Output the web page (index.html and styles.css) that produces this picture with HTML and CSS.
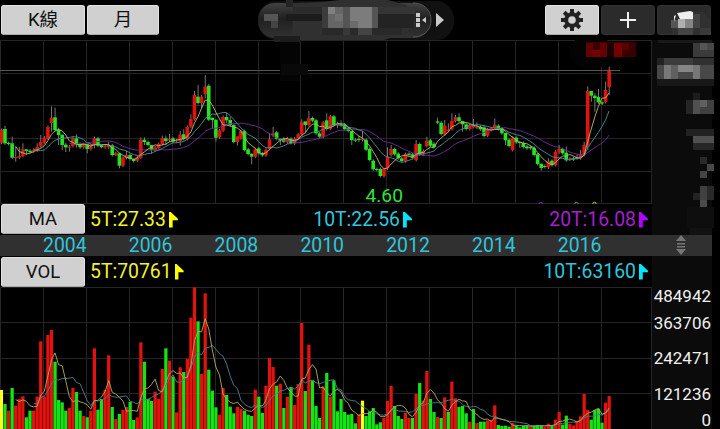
FILE: index.html
```html
<!DOCTYPE html>
<html lang="zh-Hant">
	<head>
		<meta charset="UTF-8">
		<title>K線</title>
		<link rel="stylesheet" href="styles.css">
	</head>
	<body>
		<div class="app">
			<div class="toolbar">
				<button class="btn kline">K線</button>
				<button class="btn month">月</button>
				<svg class="stock" width="198" height="42" viewBox="257 0 198 42">
					<defs>
						<linearGradient id="pill" x1="0" y1="0" x2="0" y2="1">
							<stop offset="0" stop-color="#414141"/>
							<stop offset="0.45" stop-color="#202020"/>
							<stop offset="1" stop-color="#323232"/>
						</linearGradient>
					</defs>
					<rect x="258" y="1" width="196" height="39" rx="18" fill="#111"/>
					<rect x="258" y="3" width="173" height="35" rx="17" fill="url(#pill)"/>
					<path d="M413 3c12 0 18 8 18 17s-6 17-18 17" fill="none" stroke="#555"/>
					<path d="M293 3L320 2l20-2h48l18 5 8 10 1 11-12 8-22 7h-47l-42-1z" fill="#303030"/>
					<g class="mosaic" id="nameMosaic"></g>
					<path d="M416 13h4v4h-4zM416 18h4v4h-4zM416 23h4v4h-4zM426 17v6l-4-3zM436 13l8 7-8 7z" fill="#c9c9c9"/>
				</svg>
				<button class="btn gear">
					<svg width="24" height="24" viewBox="-12 -12 24 24">
						<g fill="#222">
							<rect x="-2" y="-11" width="4" height="22"/>
							<rect x="-2" y="-11" width="4" height="22" transform="rotate(45)"/>
							<rect x="-2" y="-11" width="4" height="22" transform="rotate(90)"/>
							<rect x="-2" y="-11" width="4" height="22" transform="rotate(135)"/>
							<circle r="7.8"/>
						</g>
						<circle r="3.8" fill="#d2d2d2"/>
					</svg>
				</button>
				<button class="btn dark">
					<svg width="18" height="18" viewBox="0 0 18 18"><path d="M9 1v16M1 9h16" stroke="#eee" stroke-width="2"/></svg>
				</button>
				<button class="btn dark cards">
					<svg width="40" height="30" viewBox="671 5 40 30">
						<path d="M672 20l3-4 10-4h18l7 7v16h-38z" fill="#303030"/>
						<g class="mosaic" id="cardMosaic"></g>
						<path d="M677 13l13-2 3 1v7h-13zM674 16l2-1-2 7z" fill="#eee"/>
					</svg>
				</button>
			</div>

			<div class="panel">
				<div class="left">
					<svg class="price" id="price" width="652" height="164" viewBox="0 40 652 164"></svg>
					<div class="legend">
						<button class="btn">MA</button>
						<div class="t5">5T:27.33<i class="flag"></i></div>
						<div class="t10">10T:22.56<i class="flag"></i></div>
						<div class="t20">20T:16.08<i class="flag"></i></div>
					</div>
				</div>
				<svg class="side" id="side" width="68" height="195" viewBox="652 40 68 195"></svg>
			</div>

			<div class="years">
				<span>2004</span><span>2006</span><span>2008</span><span>2010</span><span>2012</span><span>2014</span><span>2016</span>
				<svg class="drag" width="10" height="20" viewBox="0 0 10 20">
					<path d="M5 0l5 6H0zM1 8h8v1.5H1zM1 11h8v1.5H1zM0 14h10l-5 6z" fill="#777"/>
				</svg>
			</div>

			<div class="panel">
				<div class="left">
					<div class="legend vol">
						<button class="btn">VOL</button>
						<div class="t5">5T:70761<i class="flag"></i></div>
						<div></div>
						<div class="t10">10T:63160<i class="flag"></i></div>
					</div>
					<svg class="volume" id="volume" width="652" height="142" viewBox="0 287 652 142"></svg>
				</div>
				<div class="scale">
					<span>484942</span>
					<span>363706</span>
					<span>242471</span>
					<span>121236</span>
					<span>0</span>
				</div>
			</div>
		</div>
		<script src="chart.js"></script>
	</body>
</html>
```
FILE: styles.css
```css
* {
    margin: 0;
    padding: 0;
    box-sizing: border-box;
}
body {
    width: 720px;
    height: 429px;
    background: #000;
    overflow: hidden;
    font-family: Roboto, "Noto Sans CJK TC", sans-serif;
    font-size: 19.4px;
}
svg {
    display: block;
}
.toolbar {
    height: 40px;
    display: flex;
    align-items: flex-start;
    padding: 5px 0 0 1px;
    gap: 2px;
}
.btn {
    width: 84px;
    height: 30px;
    border: 1px solid #e2e2e2;
    border-bottom-color: #aaa;
    border-radius: 3px;
    background: #d0d0d0;
    color: #111;
    font-family: inherit;
    font-size: 18.5px;
    line-height: 28px;
    display: flex;
    align-items: center;
    justify-content: center;
}
.toolbar .month {
    width: 72px;
}
.stock {
    margin: -5px 88px 0 96px;
    flex: none;
}
.toolbar .gear,
.toolbar .dark {
    width: 54px;
    flex: none;
}
.toolbar .dark {
    background: #2b2b2b;
    border-color: #333;
}
.toolbar .cards {
    justify-content: flex-end;
}
.cards svg {
    flex: none;
    margin-right: -1px;
}
.panel {
    display: flex;
}
.left {
    width: 652px;
}
.price {
    overflow: visible;
}
/* 均線數值列 */
.legend {
    height: 31px;
    padding-left: 1px;
    display: grid;
    grid-template-columns: 89px 161px 161px 240px;
    align-items: center;
}
.legend .btn {
    align-self: start;
}
.legend.vol .btn {
    align-self: center;
}
.legend div {
    display: flex;
    align-items: center;
    line-height: 30px;
}
.t5 {
    color: #f2f22e;
}
.t10 {
    color: #2fc6dc;
    justify-content: flex-end;
}
.t20 {
    color: #a520cf;
    justify-content: flex-end;
}
.legend .t20,
.legend.vol .t10 {
    padding-right: 4px;
}
.flag {
    width: 9px;
    height: 16px;
    margin-left: 3px;
    background: #ff0;
    clip-path: polygon(0 0, 15% 0, 100% 46%, 100% 54%, 42% 54%, 42% 100%, 0 100%);
}
.t10 .flag {
    background: #00e5ff;
}
.t20 .flag {
    background: #b400ff;
}
.years {
    width: 712px;
    height: 21px;
    padding-left: 43px;
    background: #303030;
    color: #2fc6dc;
    display: grid;
    grid-template-columns: repeat(6, 85.8px) 118px 10px;
    line-height: 21px;
}
.scale {
    width: 60px;
    height: 173px;
    padding: 31px 1px 0 0;
    background: #0b0b0b;
    color: #f0f0f0;
    font-size: 17px;
    text-align: right;
    display: grid;
    grid-template-rows: 18px 36px 35px 36px 17px;
    align-items: center;
    line-height: 17px;
}
```
FILE: chart.js
```js
var NS = 'http://www.w3.org/2000/svg';
var STEP = 3.575; // 每根K棒的間距
var RED = '#e3120e', GREEN = '#1fe61f';

// [漲跌, 實體上緣, 實體下緣, 最高, 最低]，單位為 1/3 px，由 y=95 起算
var candles = [
	['r',105,143],['g',102,145,92],['g',144,147],['g',145,188,125],['r',186,189,155,200],['r',183,188,155],
	['r',163,183,145],['g',163,168,163,180],['g',167,171],['r',165,169],['r',156,166,145],['r',141,154,120],
	['r',128,142],['r',96,130],['r',68,84,34,110],['g',67,105,38],['g',104,120,98,150],['g',119,150,119,165],
	['g',149,157,143,171],['r',155,158,150,170],['r',130,153],['g',130,148,118,158],['g',147,157],['r',148,157],
	['g',148,162,148,175],['r',150,162],['r',130,150,124,160],['g',130,152],['g',151,157,151,160],['r',154,157],
	['r',151,157,140,163],['g',151,180],['r',174,180,170,183],['g',175,212,175,220],['r',188,212],['r',180,189,168],
	['g',180,192],['g',191,198,191,203],['r',187,197],['r',135,188,128],['g',134,141,127,150],['g',141,150],
	['g',150,164,150,175],['r',157,165],['r',147,159],['r',130,147,122],['g',130,138,122,150],['r',132,136,117],
	['g',130,140],['r',136,139],['r',119,138,108,152],['g',118,132,103],['r',96,132],['r',72,95,58],
	['r',0,72,-12],['g',5,24,-30],['r',5,24,0,40],['r',-25,-2,-60,10],['g',-28,74],['g',68,75,68,100],
	['g',74,128,74,140],['r',106,127],['r',66,107],['g',66,76,54,85],['g',75,90,65],['g',90,141],
	['r',124,141,124,152],['r',108,130],['g',108,165],['g',163,177],['g',176,185,176,208],['r',163,185],
	['g',160,175],['g',175,181],['r',164,181],['r',133,162,115],['r',115,122,96],['g',112,132],
	['g',131,136,131,150],['g',131,140],['r',131,142],['g',131,144],['r',131,146],['r',118,130],
	['r',82,118,73],['g',79,90,79,115],['r',69,90,48],['g',69,77],['g',76,115],['g',115,125],
	['r',82,125],['g',76,102,55],['r',64,101],['g',64,90,60],['r',87,90,80,100],['g',88,91,76],
	['g',89,102],['g',100,108],['g',108,135,108,150],['g',134,137],['g',132,135,122,142],['r',132,135,108],
	['g',134,164],['g',162,195],['g',197,223],['g',222,225],['g',222,243],['r',220,243,220,248],
	['r',185,220,157],['r',162,180,150],['g',162,178],['g',176,190],['g',190,198],['r',177,198],
	['g',176,180],['g',178,188],['r',147,195,135],['g',147,178],['r',168,178],['r',137,153,125],
	['g',136,152],['g',146,156],['g',79,83,68],['g',83,117],['r',92,118,75],['r',104,108,85],
	['r',78,102,55],['r',67,78,60],['g',67,78,55],['g',78,88,78,110],['g',88,102],['r',92,102],
	['r',92,96,72],['r',94,98,82],['g',95,103],['g',97,123],['r',103,122],['r',100,105],
	['r',89,100,70],['g',92,102],['g',100,115],['g',114,136,114,150],['g',134,153],['r',128,165],
	['g',128,142],['g',141,144,141,158],['g',144,156],['g',154,160],['g',156,160],['g',158,180],
	['g',178,207],['g',206,219,206,227],['g',213,216],['r',199,217,190],['g',197,210],['r',170,210],
	['r',162,172,150],['g',162,175],['g',173,196,155],['r',190,193],['g',190,193],['g',187,190,178],
	['r',178,190,165],['r',150,180,140],['r',-12,150,-26,165],['g',-12,2,-12,20],['g',2,9,-5,50],['g',6,22,-18],
	['g',22,26],['r',-15,21,-40],['r',-73,-23,-85,0]
];

// 成交量柱高 (1/3 px)
var volumes = [
	117,75,55,123,70,90,98,35,55,55,97,263,97,282,297,202,87,80,55,63,123,111,55,39,35,55,242,58,90,117,221,66,30,45,57,66,
	81,27,35,260,202,90,84,112,90,180,242,205,157,50,185,171,210,334,425,323,165,407,178,115,65,43,123,102,67,47,66,61,55,
	43,39,118,97,48,130,213,186,130,136,63,97,126,72,135,318,114,253,146,69,33,128,168,97,146,53,90,51,43,45,17,44,85,39,53,
	63,14,20,33,84,129,69,39,30,48,33,33,105,138,85,174,90,51,36,33,95,51,142,92,66,69,47,22,60,18,22,22,26,27,71,12,9,10,7,
	18,10,5,9,10,8,10,12,9,6,16,10,28,51,13,40,16,11,25,38,105,57,28,57,61,19,79,99
];
var volColors =
	'ygrgrrrggrrrrrrggggrrggrgrrggrrgrgrrggrrgggrrrgrgrrgrrrgrrgggrrgggrrggg' +
	'rggrrrgrgrgrrrgrgggrgrgggggggry' +
	'gggggrrrgggrrgrgrrggrgrgrrgggrgrggrrrgggg' +
	'rggggrgggrrgrrggrrrrrrggggrr';

function add(parent, tag, attrs) {
	var el = document.createElementNS(NS, tag);
	for (var k in attrs) {
		el.setAttribute(k, attrs[k]);
	}
	parent.appendChild(el);
	return el;
}
function rect(parent, x, y, w, h, fill) {
	return add(parent, 'rect', { x: x, y: y, width: w, height: h, fill: fill });
}
function barX(i) {
	return 1.4 + i * STEP;
}

function drawGrid(svg, top, bottom, rows) {
	for (var i = 0; i < 15; i++) {
		rect(svg, Math.round(i * 42.92), top, 1, bottom - top, '#252525');
	}
	rect(svg, 651, top, 1, bottom - top, '#252525');
	rows.forEach(function(y) {
		rect(svg, 0, y, 652, 1, '#252525');
	});
}

// n 日均線
function drawAverage(svg, list, n, color) {
	var points = [];
	for (var i = n - 1; i < list.length; i++) {
		var sum = 0;
		for (var j = 0; j < n; j++) {
			sum += list[i - j];
		}
		points.push(barX(i).toFixed(1) + ',' + (sum / n).toFixed(1));
	}
	add(svg, 'polyline', { points: points.join(' '), fill: 'none', stroke: color, 'stroke-width': 0.95 });
}

var price = document.getElementById('price');
drawGrid(price, 40, 204, [40, 73, 105, 138, 171, 203]);
rect(price, 0, 70, 620, 1, '#555');

var closes = candles.map(function(c, i) {
	var x = barX(i);
	var top = 95 + c[1] / 3, bottom = 95 + c[2] / 3;
	var high = c[3] === undefined ? top - 1.5 : 95 + c[3] / 3;
	var low = c[4] === undefined ? bottom + 1.5 : 95 + c[4] / 3;
	rect(price, x - 0.4, high, 0.9, low - high, '#858585');
	rect(price, x - 1.8, top, 3.6, bottom - top, c[0] === 'r' ? RED : GREEN);
	return c[0] === 'r' ? top : bottom;
});
drawAverage(price, closes, 20, '#702c96');
drawAverage(price, closes, 10, '#438c99');
drawAverage(price, closes, 5, '#b8b06c');

var low = add(price, 'text', { x: 365.5, y: 202, fill: '#2fe23a', 'font-size': 19.2 });
low.textContent = '4.60';
[[540.8, '#8c22b5'], [576.5, '#2aa9b8'], [594.5, '#d3d32a']].forEach(function(d) {
	add(price, 'path', { d: 'M' + (d[0] - 1.7) + ' 204a1.7 1.7 0 0 1 3.4 0', fill: 'none', stroke: d[1] });
});

var volume = document.getElementById('volume');
drawGrid(volume, 287, 429, [287, 322, 358, 393]);
volumes.forEach(function(v, i) {
	var c = volColors[i];
	rect(volume, barX(i) - 1.6, 429 - v / 3, 3.25, v / 3, c === 'y' ? '#ffff20' : c === 'r' ? RED : '#12e512');
});
var volY = volumes.map(function(v) {
	return 429 - v / 3;
});
drawAverage(volume, volY, 10, '#467d88');
drawAverage(volume, volY, 5, '#aca260');

// 馬賽克色塊
function mosaic(parent, cells) {
	cells.forEach(function(c) {
		rect(parent, c[0], c[1], c[2], c[3], c[4]);
	});
}
mosaic(document.getElementById('nameMosaic'), [
	[286,0,7,7,'#252525'],[293,7,29,7,'#2b2b2b'],[286,14,36,7,'#1c1c1c'],
	[322,7,93,7,'#353535'],[378,14,36,14,'#232323'],[322,28,80,7,'#292929'],
	[264,14,14,7,'#555'],[271,21,7,7,'#444'],[322,7,6,21,'#3c3c3c'],
	[328,7,15,21,'#666'],[328,7,7,7,'#808080'],[335,14,8,7,'#707070'],
	[343,7,7,21,'#555'],[350,7,22,21,'#7c7c7c'],[350,21,8,7,'#6b6b6b'],
	[372,7,6,21,'#555'],[343,28,7,7,'#383838'],[358,28,14,7,'#444'],[274,36,26,6,'#1d1d1d']
]);
mosaic(document.getElementById('cardMosaic'), [
	[671,20,7,8,'#555'],[678,19,7,9,'#b0b0b0'],[685,19,8,9,'#858585'],
	[693,14,7,14,'#444'],[678,28,15,7,'#444'],[700,28,11,7,'#3a3a3a']
]);
add(price, 'ellipse', { cx: 591, cy: 52, rx: 22, ry: 17, fill: '#030303' });
mosaic(price, [
	[280,40,20,2,'#1b1b1b'],[280,42,20,39,'#040404'],[281,64,27,11,'#090909'],
	[586,42,50,15,'#3b0000'],[586,43,7,14,'#650000'],[593,50,7,7,'#740000'],[600,43,7,14,'#650000'],
	[607,43,7,14,'#180000'],[614,43,8,14,'#740000'],[622,43,7,7,'#5b0000'],[629,43,7,14,'#390000']
]);

var side = document.getElementById('side');
rect(side, 652, 40, 60, 195, '#0b0b0b');
mosaic(side, [
	[658,36,54,7,'#191919'],
	[693,43,21,14,'#3b3b3b'],[700,43,7,7,'#555'],[707,43,7,7,'#484848'],
	[657,58,57,21,'#484848'],[657,58,7,7,'#222'],[664,58,29,7,'#3c3c3c'],[693,58,21,7,'#303030'],
	[664,65,7,14,'#777'],[671,65,7,14,'#606060'],[678,65,15,7,'#858585'],[693,65,7,14,'#777'],
	[657,79,57,7,'#181818'],
	[686,100,7,14,'#252525'],[693,93,7,7,'#1c1c1c'],[693,100,21,14,'#404040'],[693,100,7,14,'#505050'],[700,100,7,7,'#606060'],
	[686,129,28,7,'#222'],[693,136,21,7,'#505050'],[693,143,21,7,'#272727'],
	[700,157,7,7,'#292929'],[707,164,7,7,'#484848'],[700,171,7,7,'#444'],
	[700,186,7,21,'#404040'],[707,186,7,14,'#292929'],[693,193,7,7,'#222'],
	[687,207,27,21,'#0e0e0e'],[700,200,7,7,'#4a4a4a'],[690,228,22,7,'#121212']
]);
```
